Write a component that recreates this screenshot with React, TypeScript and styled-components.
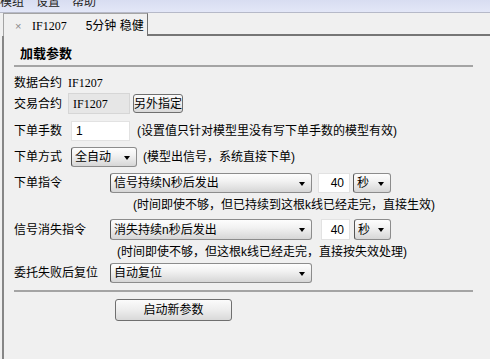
import React from "react";
import styled, { createGlobalStyle } from "styled-components";

const GlobalStyle = createGlobalStyle`
  html, body { margin: 0; padding: 0; background: #f0f0f0; }
  body {
    font-family: "Liberation Sans", "Noto Sans CJK SC", sans-serif;
    font-size: 12px;
    color: #000;
  }
  * { box-sizing: border-box; }
`;

const Window = styled.div`
  width: 490px;
  height: 359px;
  overflow: hidden;
  display: flex;
  flex-direction: column;
  background: #f0f0f0;
`;

const MenuBar = styled.div`
  height: 13px;
  display: flex;
  gap: 12px;
  overflow: hidden;
  border-bottom: 1px solid #b6b9c8;
  background: linear-gradient(#d8ddf1, #e3e7f7);
`;

const MenuItem = styled.span`
  font-size: 12px;
  line-height: 12px;
  margin-top: -4px;
  color: #222;
  white-space: nowrap;
`;

const TabStrip = styled.div`
  display: flex;
  height: 23px;
  padding-left: 3px;
`;

const Tab = styled.div`
  width: 145px;
  height: 23px;
  display: flex;
  align-items: center;
  padding: 2px 0 0 11px;
  border: 1px solid #a4a4a4;
  border-bottom: none;
  border-right-color: #707070;
`;

const TabClose = styled.span`
  font-size: 11px;
  line-height: 12px;
  color: #8a8a8a;
  width: 6px;
`;

const Code = styled.span<{ $ml?: number }>`
  font-family: "Liberation Serif", serif;
  font-size: 12px;
  line-height: 14px;
  margin-left: ${(p) => p.$ml ?? 0}px;
  white-space: nowrap;
`;

const TabTitle = styled.span`
  margin-left: 19px;
  line-height: 14px;
  white-space: nowrap;
`;

const TabFiller = styled.div`
  flex: 1;
  height: 23px;
  border-bottom: 2px solid #767676;
`;

const Panel = styled.div`
  flex: 1;
  margin-left: 2px;
  border-left: 2px solid #868686;
  padding: 10px 0 0 10px;
`;

const Title = styled.div`
  margin-left: 6px;
  font-size: 13px;
  font-weight: bold;
  line-height: 14px;
  font-family: "Noto Sans CJK SC", sans-serif;
`;

const Separator = styled.div<{ $mt: number }>`
  width: 459px;
  height: 2px;
  margin-top: ${(p) => p.$mt}px;
  background: #a4a4a4;
`;

const Row = styled.div<{ $h: number; $mt: number }>`
  display: flex;
  align-items: center;
  height: ${(p) => p.$h}px;
  margin-top: ${(p) => p.$mt}px;
  white-space: nowrap;
`;

const Label = styled.span<{ $w: number }>`
  width: ${(p) => p.$w}px;
  flex: none;
  line-height: 14px;
`;

const Hint = styled.span<{ $ml: number }>`
  margin-left: ${(p) => p.$ml}px;
  line-height: 14px;
`;

const Note = styled.div<{ $ml: number; $mt: number }>`
  margin-left: ${(p) => p.$ml}px;
  margin-top: ${(p) => p.$mt}px;
  height: 14px;
  line-height: 14px;
  white-space: nowrap;
`;

const TextBox = styled.div<{ $w: number; $ml?: number; $disabled?: boolean; $right?: boolean }>`
  width: ${(p) => p.$w}px;
  height: 100%;
  margin-left: ${(p) => p.$ml ?? 0}px;
  display: flex;
  align-items: center;
  justify-content: ${(p) => (p.$right ? "flex-end" : "flex-start")};
  padding: 0 5px 0 4px;
  background: ${(p) => (p.$disabled ? "#e6e6e6" : "#fff")};
  border: 1px solid ${(p) => (p.$disabled ? "#d6d6d6" : "#e2e2e2")};
  line-height: 14px;
`;

const Select = styled.div<{ $w: number; $ml?: number }>`
  width: ${(p) => p.$w}px;
  height: 100%;
  margin-left: ${(p) => p.$ml ?? 0}px;
  display: flex;
  align-items: center;
  justify-content: space-between;
  padding: 0 6px 0 3px;
  border: 1px solid #8c8c8c;
  border-left-color: #555;
  border-radius: 3px;
  background: linear-gradient(#fdfdfd, #f2f2f2 40%, #d6d6d6);
  line-height: 14px;
  flex: none;
`;

const Arrow = styled.span`
  width: 0;
  height: 0;
  border-left: 3.5px solid transparent;
  border-right: 3.5px solid transparent;
  border-top: 4px solid #000;
  margin-top: 1px;
`;

const Button = styled.div<{ $w: number; $h: number; $ml?: number; $mt?: number }>`
  width: ${(p) => p.$w}px;
  height: ${(p) => p.$h}px;
  margin-left: ${(p) => p.$ml ?? 0}px;
  margin-top: ${(p) => p.$mt ?? 0}px;
  display: flex;
  align-items: center;
  justify-content: center;
  border: 1px solid #6f6f6f;
  border-radius: 3px;
  background: linear-gradient(#fbfbfb, #ededed 50%, #d9d9d9);
  line-height: 14px;
  white-space: nowrap;
  flex: none;
`;

const Combo: React.FC<{ w: number; ml?: number; children: React.ReactNode }> = ({ w, ml, children }) => (
  <Select $w={w} $ml={ml}>
    <span>{children}</span>
    <Arrow />
  </Select>
);

export default function App() {
  return (
    <Window>
      <GlobalStyle />
      <MenuBar>
        <MenuItem>模组</MenuItem>
        <MenuItem>设置</MenuItem>
        <MenuItem>帮助</MenuItem>
      </MenuBar>
      <TabStrip>
        <Tab>
          <TabClose>×</TabClose>
          <Code $ml={11}>IF1207</Code>
          <TabTitle>5分钟 稳健</TabTitle>
        </Tab>
        <TabFiller />
      </TabStrip>
      <Panel>
        <Title>加载参数</Title>
        <Separator $mt={5} />

        <Row $h={20} $mt={6}>
          <Label $w={54}>数据合约</Label>
          <Code>IF1207</Code>
        </Row>

        <Row $h={21} $mt={0}>
          <Label $w={54}>交易合约</Label>
          <TextBox $w={62} $disabled>
            <Code>IF1207</Code>
          </TextBox>
          <Button $w={50} $h={19} $ml={3}>另外指定</Button>
        </Row>

        <Row $h={20} $mt={7}>
          <Label $w={57}>下单手数</Label>
          <TextBox $w={59}>1</TextBox>
          <Hint $ml={7}>(设置值只针对模型里没有写下单手数的模型有效)</Hint>
        </Row>

        <Row $h={20} $mt={6}>
          <Label $w={57}>下单方式</Label>
          <Combo w={66}>全自动</Combo>
          <Hint $ml={6}>(模型出信号，系统直接下单)</Hint>
        </Row>

        <Row $h={20} $mt={6}>
          <Label $w={96}>下单指令</Label>
          <Combo w={202}>信号持续N秒后发出</Combo>
          <TextBox $w={32} $ml={6} $right>40</TextBox>
          <Combo w={38} ml={3}>秒</Combo>
        </Row>
        <Note $ml={119} $mt={5}>(时间即使不够，但已持续到这根k线已经走完，直接生效)</Note>

        <Row $h={21} $mt={7}>
          <Label $w={96}>信号消失指令</Label>
          <Combo w={202}>消失持续n秒后发出</Combo>
          <TextBox $w={29} $ml={9} $right>40</TextBox>
          <Combo w={37} ml={4}>秒</Combo>
        </Row>
        <Note $ml={103} $mt={5}>(时间即使不够，但这根k线已经走完，直接按失效处理)</Note>

        <Row $h={20} $mt={4}>
          <Label $w={96}>委托失败后复位</Label>
          <Combo w={202}>自动复位</Combo>
        </Row>

        <Separator $mt={7} />
        <Button $w={117} $h={22} $ml={101} $mt={7}>启动新参数</Button>
      </Panel>
    </Window>
  );
}
